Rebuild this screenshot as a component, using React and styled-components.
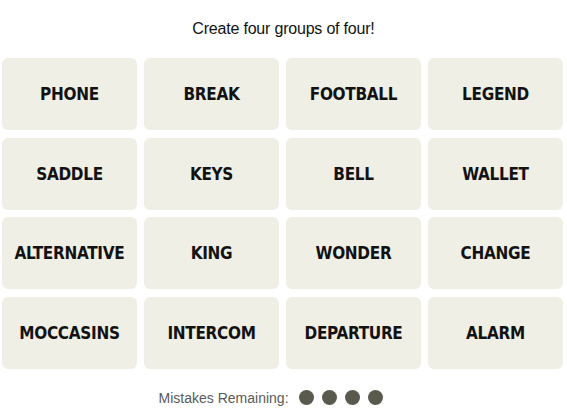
import React from "react";
import styled, { createGlobalStyle } from "styled-components";

const GlobalStyle = createGlobalStyle`
  html, body {
    margin: 0;
    padding: 0;
    background: #fff;
    font-family: "Liberation Sans", Arial, sans-serif;
  }
`;

const Page = styled.div`
  width: 567px;
  height: 408px;
  display: flex;
  flex-direction: column;
  align-items: center;
`;

const Title = styled.p`
  margin: 19px 0 0;
  height: 20px;
  font-size: 16px;
  line-height: 20px;
  color: #121212;
  letter-spacing: -0.2px;
`;

const Board = styled.div`
  margin-top: 19px;
  display: grid;
  grid-template-columns: repeat(4, 135px);
  grid-auto-rows: 72px;
  column-gap: 7px;
  row-gap: 7.5px;
  padding-left: 2px;
  align-self: flex-start;
`;

const Tile = styled.button`
  border: none;
  border-radius: 6px;
  background: #efefe6;
  color: #121212;
  display: flex;
  align-items: center;
  justify-content: center;
  font-family: "DejaVu Sans Condensed", "DejaVu Sans", sans-serif;
  font-weight: 700;
  font-size: 17px;
  letter-spacing: -0.3px;
  padding: 0;
  cursor: pointer;
`;

const Footer = styled.div`
  margin-top: 21px;
  margin-right: 25px;
  display: flex;
  align-items: center;
  gap: 8px;
`;

const Label = styled.span`
  font-size: 14px;
  color: #5a5a5a;
  margin-right: 2px;
`;

const Dots = styled.div`
  display: flex;
  gap: 8.3px;
`;

const Dot = styled.span`
  width: 15px;
  height: 15px;
  border-radius: 50%;
  background: #5a594e;
`;

const words = [
  "PHONE", "BREAK", "FOOTBALL", "LEGEND",
  "SADDLE", "KEYS", "BELL", "WALLET",
  "ALTERNATIVE", "KING", "WONDER", "CHANGE",
  "MOCCASINS", "INTERCOM", "DEPARTURE", "ALARM",
];

export default function App() {
  return (
    <Page>
      <GlobalStyle />
      <Title>Create four groups of four!</Title>
      <Board>
        {words.map((w) => (
          <Tile key={w}>{w}</Tile>
        ))}
      </Board>
      <Footer>
        <Label>Mistakes Remaining:</Label>
        <Dots>
          {[0, 1, 2, 3].map((i) => (
            <Dot key={i} />
          ))}
        </Dots>
      </Footer>
    </Page>
  );
}
